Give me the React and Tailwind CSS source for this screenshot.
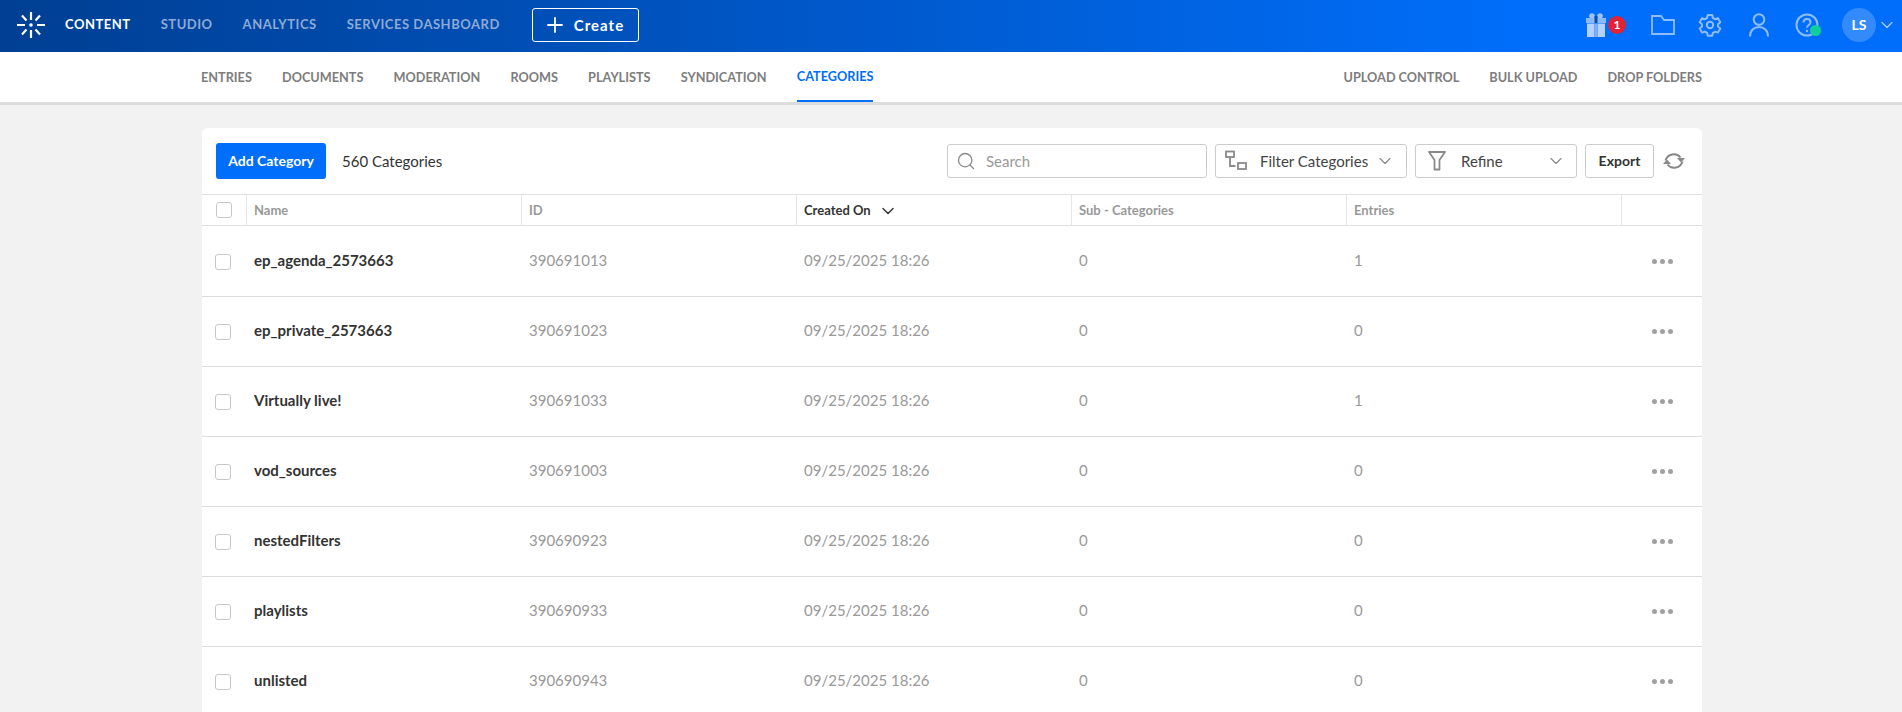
import React from 'react';
import { Search, ChevronDown, Plus } from 'lucide-react';

const subNavLeft = ['Entries', 'Documents', 'Moderation', 'Rooms', 'Playlists', 'Syndication', 'Categories'];
const subNavRight = ['Upload Control', 'Bulk Upload', 'Drop Folders'];

const rows = [
    { name: 'ep_agenda_2573663', id: '390691013', entries: 1 },
    { name: 'ep_private_2573663', id: '390691023', entries: 0 },
    { name: 'Virtually live!', id: '390691033', entries: 1 },
    { name: 'vod_sources', id: '390691003', entries: 0 },
    { name: 'nestedFilters', id: '390690923', entries: 0 },
    { name: 'playlists', id: '390690933', entries: 0 },
    { name: 'unlisted', id: '390690943', entries: 0 },
];

const Logo = () => (
    <svg width="28" height="26" viewBox="0 0 28 26" fill="none" stroke="#fff" strokeWidth="2.2">
        <path d="M14 0v8M14 18v8M0 13h8M20 13h8M5 3.5l4.5 5M23 3.5l-4.5 5M5 22.5l4.5-5M23 22.5l-4.5-5" />
        <circle cx="14" cy="13" r="1.8" fill="#fff" stroke="none" />
    </svg>
);

const Gift = () => (
    <svg width="20" height="24" viewBox="0 0 20 24">
        <circle cx="6" cy="3" r="2.8" fill="#9ec3fa" />
        <circle cx="14" cy="3" r="2.8" fill="#9ec3fa" />
        <rect x="0" y="5" width="20" height="5" fill="#8db8f8" />
        <rect x="1" y="10.5" width="7.5" height="13.5" fill="#b4d2fc" />
        <rect x="11.5" y="10.5" width="7.5" height="13.5" fill="#b4d2fc" />
        <rect x="8.5" y="10.5" width="3" height="13.5" fill="#7fb0f7" />
        <rect x="8.5" y="3" width="3" height="7" fill="#0b4ea8" />
    </svg>
);

const FolderIcon = () => (
    <svg width="24" height="20" viewBox="0 0 24 20" fill="none" stroke="#8fbcfb" strokeWidth="1.8">
        <path d="M1 1h9l3 4h10v14H1z" />
    </svg>
);

const Gear = () => (
    <svg width="24" height="24" viewBox="0 0 24 24" fill="none" stroke="#8fbcfb" strokeWidth="2" strokeLinejoin="round">
        <path d="M9.7 2h4.6l.6 3 2.2 1.2 2.9-1 2.3 4-2.3 2v2.4l2.3 2-2.3 4-2.9-1-2.2 1.2-.6 3H9.7l-.6-3-2.2-1.2-2.9 1-2.3-4 2.3-2v-2.4l-2.3-2 2.3-4 2.9 1 2.2-1.2z" />
        <circle cx="12" cy="12" r="3.2" />
    </svg>
);

const User = () => (
    <svg width="20" height="24" viewBox="0 0 20 24" fill="none" stroke="#8fbcfb" strokeWidth="2">
        <circle cx="10" cy="6.5" r="5.3" />
        <path d="M1 23.5c0-6 4-9.5 9-9.5s9 3.5 9 9.5" />
    </svg>
);

const Help = () => (
    <svg width="24" height="24" viewBox="0 0 24 24" fill="none" stroke="#8fbcfb" strokeWidth="2">
        <circle cx="12" cy="12" r="10.5" />
        <path d="M8.5 9.5c0-2.2 1.6-3.5 3.5-3.5s3.5 1.3 3.5 3.2c0 2.8-3.5 2.8-3.5 5.6" />
        <circle cx="12" cy="18" r="1.2" fill="#8fbcfb" stroke="none" />
    </svg>
);

const Hierarchy = () => (
    <svg width="22" height="22" viewBox="0 0 22 22" fill="none" stroke="#8a8a8a" strokeWidth="1.8">
        <rect x="1" y="1.5" width="8" height="5.5" />
        <rect x="13" y="13" width="8" height="6" />
        <path d="M5 7v9h5.5" />
    </svg>
);

const Funnel = () => (
    <svg width="18" height="20" viewBox="0 0 18 20" fill="none" stroke="#8a8a8a" strokeWidth="1.8" strokeLinejoin="round">
        <path d="M1 1h16l-5.5 8v9.5h-5V9z" />
    </svg>
);

const Refresh = () => (
    <svg width="22" height="20" viewBox="0 0 22 20" fill="none" stroke="#888" strokeWidth="2">
        <path d="M2.5 9.5A8.6 8.6 0 0 1 17.5 6.5" />
        <path d="M19.5 10.5A8.6 8.6 0 0 1 4.5 13.5" />
        <path d="M14 7h8l-4 4.5z" fill="#888" stroke="none" />
        <path d="M0 13h8l-4-4.5z" fill="#888" stroke="none" />
    </svg>
);

const Checkbox = () => (
    <span className="block w-4 h-4 rounded-[3px] border border-[#c8c8c8] bg-white" />
);

const App = () => {
    return (
        <div className="h-[712px] overflow-hidden bg-[#f2f2f2] font-['Lato',sans-serif]">
            <header className="h-[52px] flex items-center justify-between bg-gradient-to-r from-[#003f93] to-[#006efa] to-80% pl-[17px] pr-[5px] pb-[2px]">
                <div className="flex items-center">
                    <Logo />
                    <nav className="flex items-center ml-5 gap-[30px] text-[13px] font-bold tracking-[0.52px]">
                        <span className="text-white">CONTENT</span>
                        <span className="text-[#8eaad6]">STUDIO</span>
                        <span className="text-[#8eaad6]">ANALYTICS</span>
                        <span className="text-[#8eaad6]">SERVICES DASHBOARD</span>
                    </nav>
                    <button className="ml-8 h-[34px] w-[107px] flex items-center border border-white rounded-[3px] pl-[10px] text-white text-[15px] font-bold tracking-[1px]">
                        <Plus size={24} strokeWidth={1.8} />
                        <span className="ml-[7px]">Create</span>
                    </button>
                </div>
                <div className="flex items-center">
                    <div className="relative mr-[45px]">
                        <Gift />
                        <span className="absolute left-[22px] top-[3px] w-[18px] h-[18px] rounded-full bg-[#e12237] text-white text-xs font-bold flex items-center justify-center">1</span>
                    </div>
                    <div className="mr-[23px]"><FolderIcon /></div>
                    <div className="mr-[27px]"><Gear /></div>
                    <div className="mr-[26px]"><User /></div>
                    <div className="relative mr-[23px]">
                        <Help />
                        <span className="absolute left-[15px] top-[12px] w-[11px] h-[11px] rounded-full bg-[#0fd09a]" />
                    </div>
                    <div className="w-[34px] h-[34px] rounded-full bg-[#338bfb] text-white text-sm font-bold flex items-center justify-center">LS</div>
                    <ChevronDown size={20} strokeWidth={1.5} color="#a9cbfb" className="ml-px" />
                </div>
            </header>

            <div className="h-[53px] bg-white border-b-[3px] border-[#dcdcdc] flex justify-between pl-[201px] pr-[200px] text-[12.7px] font-bold text-[#7d7d7d]">
                <div className="flex gap-[30.2px]">
                    {subNavLeft.map((item) => (
                        <span
                            key={item}
                            className={`h-[50px] pt-px flex items-center uppercase ${item === 'Categories' ? 'text-[#006efa] border-b-2 border-[#006efa]' : ''}`}
                        >
                            {item}
                        </span>
                    ))}
                </div>
                <div className="flex gap-[30px]">
                    {subNavRight.map((item) => (
                        <span key={item} className="h-[50px] pt-px flex items-center uppercase">{item}</span>
                    ))}
                </div>
            </div>

            <main className="pl-[202px] pr-[200px] pt-[23px]">
                <div className="bg-white rounded-t-[6px]">
                    <div className="h-[66px] flex items-center pl-[14px] pr-[17px]">
                        <button className="w-[110px] h-9 rounded-[3px] bg-[#006efa] text-white text-sm font-bold">Add Category</button>
                        <span className="ml-4 text-[15px] text-[#333]">560 Categories</span>
                        <div className="ml-auto flex items-center gap-2">
                            <div className="w-[260px] h-[34px] border border-[#ccc] rounded-[3px] flex items-center px-2 gap-[10px] text-[15px] text-[#999]">
                                <Search size={20} strokeWidth={1.6} color="#888" />
                                Search
                            </div>
                            <div className="w-[192px] h-[34px] border border-[#ccc] rounded-[3px] flex items-center pl-[9px] pr-[11px] text-[15px] text-[#444]">
                                <Hierarchy />
                                <span className="ml-[13px]">Filter Categories</span>
                                <ChevronDown size={20} strokeWidth={1.4} color="#888" className="ml-auto" />
                            </div>
                            <div className="w-[162px] h-[34px] border border-[#ccc] rounded-[3px] flex items-center pl-3 pr-[10px] text-[15px] text-[#444]">
                                <Funnel />
                                <span className="ml-[15px]">Refine</span>
                                <ChevronDown size={20} strokeWidth={1.4} color="#888" className="ml-auto" />
                            </div>
                            <button className="w-[69px] h-[34px] border border-[#ccc] rounded-[3px] text-sm font-bold text-[#333]">Export</button>
                            <div className="ml-px"><Refresh /></div>
                        </div>
                    </div>

                    <div className="h-[32px] mb-px grid grid-cols-[45px_275px_275px_275px_275px_275px_80px] border-y border-[#e0e0e0] text-[13px] font-bold text-[#999]">
                        <div className="flex items-center pl-[14px] border-r border-[#e6e6e6]"><Checkbox /></div>
                        <div className="flex items-center pl-[7px] pt-px border-r border-[#e6e6e6]">Name</div>
                        <div className="flex items-center pl-[7px] pt-px border-r border-[#e6e6e6]">ID</div>
                        <div className="flex items-center pl-[7px] pt-px border-r border-[#e6e6e6] text-[#333]">
                            Created On
                            <ChevronDown size={20} strokeWidth={1.7} color="#333" className="ml-[7px]" />
                        </div>
                        <div className="flex items-center pl-[7px] pt-px border-r border-[#e6e6e6]">Sub - Categories</div>
                        <div className="flex items-center pl-[7px] pt-px border-r border-[#e6e6e6]">Entries</div>
                        <div />
                    </div>

                    {rows.map((row) => (
                        <div key={row.id} className="h-[70px] grid grid-cols-[45px_275px_275px_275px_275px_275px_80px] items-center border-b border-[#dcdcdc] text-[15px] text-[#999]">
                            <div className="pl-[13px]"><Checkbox /></div>
                            <div className="pl-[7px] pb-[2px] font-bold text-[#333]">{row.name}</div>
                            <div className="pl-[7px] pb-[2px]">{row.id}</div>
                            <div className="pl-[7px] pb-[2px]">09/25/2025 18:26</div>
                            <div className="pl-[7px] pb-[2px]">0</div>
                            <div className="pl-[7px] pb-[2px]">{row.entries}</div>
                            <div className="flex justify-center gap-[3px]">
                                <span className="w-[5px] h-[5px] rounded-full bg-[#a0a0a0]" />
                                <span className="w-[5px] h-[5px] rounded-full bg-[#a0a0a0]" />
                                <span className="w-[5px] h-[5px] rounded-full bg-[#a0a0a0]" />
                            </div>
                        </div>
                    ))}
                </div>
            </main>
        </div>
    );
};

export default App;
